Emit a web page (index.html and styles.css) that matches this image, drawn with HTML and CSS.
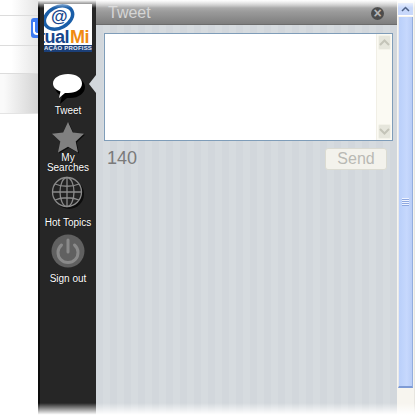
FILE: index.html
```html
<!DOCTYPE html>
<html lang="pt">
<head>
    <meta charset="UTF-8">
    <meta name="viewport" content="width=device-width, initial-scale=1.0">
    <title>Tweet</title>
    <link rel="stylesheet" href="styles.css">
</head>
<body>
    <div class="window">
        <!-- Pagina por tras do painel -->
        <div class="behind">
            <div class="row row-top"></div>
            <div class="row row-logo"><span class="blue-tag"></span></div>
            <div class="row row-mid"></div>
            <div class="row row-low"></div>
        </div>

        <!-- Menu lateral -->
        <nav class="sidebar">
            <div class="logo">
                <svg class="logo-ring" width="32" height="28" viewBox="0 0 32 28">
                    <ellipse cx="14.500" cy="13.500" rx="15" ry="10.500" transform="rotate(-28 14.500 13.500)" fill="none" stroke="#1a5ea8" stroke-width="3.500"/>
                </svg>
                <span class="logo-at">@</span>
                <div class="logo-name"><span class="logo-blue">tual</span><span class="logo-orange">Mi</span></div>
                <div class="logo-sub">AÇÃO PROFISS</div>
            </div>
            <div class="item item-tweet">
                <svg class="icon" width="38" height="38" viewBox="0 0 38 38">
                    <path d="M19 6c9 0 15 4 15 10 0 6-6 11-15 11l-3 0-7 6 2-8c-4-2-7-5-7-9C4 10 10 6 19 6z" fill="#000" transform="translate(2 2)"/>
                    <path d="M19 5c8.500 0 14 4 14 9.500S27.500 24 19 24h-3l-6 5 1.500-6.500C7 21 4 18 4 14.500 4 9 10.500 5 19 5z" fill="#fff"/>
                </svg>
                <span class="label">Tweet</span>
            </div>
            <div class="item item-search">
                <svg class="icon" width="34" height="33" viewBox="0 0 34 33">
                    <path d="M17 1l4.800 10.500 11.200 1.300-8.300 7.600 2.300 11.100-10-5.700-10 5.700 2.300-11.100L1 12.800l11.200-1.300z" fill="#0c0c0c" transform="translate(1 1)"/>
                    <path d="M17 1l4.800 10.500 11.200 1.300-8.300 7.600 2.300 11.100-10-5.700-10 5.700 2.300-11.100L1 12.800l11.200-1.300z" fill="#808080"/>
                </svg>
                <span class="label">My<br>Searches</span>
            </div>
            <div class="item item-topics">
                <svg class="icon" width="34" height="34" viewBox="0 0 34 34" fill="none" stroke="#8a8a8a" stroke-width="1.300">
                    <circle cx="18" cy="18" r="15" fill="#0c0c0c" stroke="none"/>
                    <circle cx="16" cy="16" r="14.500" fill="#222"/>
                    <ellipse cx="16" cy="16" rx="7" ry="14.500"/>
                    <path d="M16 1.500v29M1.500 16h29M4 8c7 3 17 3 24 0M4 24c7-3 17-3 24 0"/>
                </svg>
                <span class="label">Hot Topics</span>
            </div>
            <div class="item item-signout">
                <svg class="icon" width="34" height="34" viewBox="0 0 34 34" fill="none">
                    <circle cx="17" cy="17" r="16.500" fill="#606060"/>
                    <path d="M10.500 11a10 10 0 1 0 13 0" stroke="#8a8a8a" stroke-width="3" stroke-linecap="round"/>
                    <path d="M17 6v12" stroke="#8a8a8a" stroke-width="3" stroke-linecap="round"/>
                </svg>
                <span class="label">Sign out</span>
            </div>
            <span class="pointer"></span>
        </nav>

        <!-- Painel do tweet -->
        <main class="main">
            <header class="title-bar">
                <span class="title">Tweet</span>
                <span class="close">&times;</span>
            </header>
            <div class="editor">
                <div class="editor-text"></div>
                <div class="editor-scroll">
                    <span class="editor-btn">
                        <svg width="11" height="7" viewBox="0 0 11 7"><path d="M1 6l4.500-4.500L10 6" fill="none" stroke="#c4c4b8" stroke-width="2"/></svg>
                    </span>
                    <span class="editor-btn">
                        <svg width="11" height="7" viewBox="0 0 11 7"><path d="M1 1l4.500 4.500L10 1" fill="none" stroke="#c4c4b8" stroke-width="2"/></svg>
                    </span>
                </div>
            </div>
            <div class="actions">
                <span class="count">140</span>
                <button class="send">Send</button>
            </div>
        </main>

        <!-- Barra de rolagem da janela -->
        <div class="scrollbar">
            <div class="scroll-up">
                <svg width="9" height="6" viewBox="0 0 9 6"><path d="M1 5l3.500-3.500L8 5" fill="none" stroke="#4d6185" stroke-width="1.500"/></svg>
            </div>
            <div class="thumb"><span class="grip"></span></div>
        </div>

        <div class="fade-top"></div>
        <div class="fade-bottom"></div>
    </div>
</body>
</html>
```

FILE: styles.css
```css
* {
    box-sizing: border-box;
}

body {
    margin: 0;
    padding: 0;
    background-color: #ffffff;
    font-family: "Liberation Sans", Arial, sans-serif;
    overflow: hidden;
}

.window {
    position: relative;
    display: flex;
    width: 415px;
    height: 416px;
    overflow: hidden;
}

/* Pagina de fundo */
.behind {
    width: 38px;
    height: 114px;
    flex-shrink: 0;
    display: flex;
    flex-direction: column;
    border-bottom: 1px solid #e4e4e4;
}

.row {
    border-bottom: 1px solid #dcdcdc;
    background: linear-gradient(to right, #ffffff 30%, #e6e6e6);
}

.row-top {
    height: 16px;
}

.row-logo {
    height: 30px;
    display: flex;
    justify-content: flex-end;
    align-items: flex-start;
    padding-top: 2px;
}

.row-mid {
    height: 28px;
}

.row-low {
    height: 39px;
    border-bottom: none;
    background: linear-gradient(to right, #fafafa 10%, #d4d4d4);
}

.blue-tag {
    position: relative;
    display: block;
    width: 7px;
    height: 20px;
    background-color: #3d7bf2;
    border-radius: 3px 0 0 3px;
}

.blue-tag::after {
    content: "";
    position: absolute;
    left: 2px;
    top: 4px;
    width: 5px;
    height: 11px;
    border-left: 2px solid #ffffff;
    border-bottom: 2px solid #ffffff;
    border-radius: 0 0 0 4px;
}

/* Menu lateral */
.sidebar {
    position: relative;
    width: 58px;
    flex-shrink: 0;
    display: flex;
    flex-direction: column;
    align-items: center;
    background-color: #262626;
    border-left: 2px solid #0c0c0c;
    padding-top: 4px;
}

.logo {
    position: relative;
    width: 48px;
    height: 48px;
    background-color: #ffffff;
    overflow: hidden;
}

.logo-ring {
    position: absolute;
    left: 0;
    top: 0;
}

.logo-at {
    position: absolute;
    left: 7px;
    top: 3px;
    color: #17468c;
    font-size: 17px;
    font-weight: bold;
    line-height: 20px;
}

.logo-name {
    position: absolute;
    left: -5px;
    top: 26px;
    font-size: 18px;
    font-weight: bold;
    line-height: 15px;
    letter-spacing: -0.5px;
    white-space: nowrap;
}

.logo-blue {
    color: #17468c;
}

.logo-orange {
    margin-left: 1px;
    color: #f08a12;
}

.logo-sub {
    position: absolute;
    left: 0;
    right: 0;
    top: 41px;
    height: 7px;
    background-color: #1b3f78;
    color: #e8ecf4;
    font-size: 6px;
    font-weight: bold;
    line-height: 7px;
    letter-spacing: 0.2px;
    white-space: nowrap;
    overflow: hidden;
}

.item {
    display: flex;
    flex-direction: column;
    align-items: center;
}

.icon {
    display: block;
}

.label {
    color: #ffffff;
    font-size: 10px;
    line-height: 10px;
    text-align: center;
    white-space: nowrap;
    text-shadow: 0 0 1px #000000;
}

.item-tweet {
    margin-top: 17px;
}

.item-tweet .label {
    margin-top: -1px;
}

.item-search {
    margin-top: 5px;
}

.item-search .label {
    margin-top: -1px;
}

.item-topics {
    margin-top: 3px;
}

.item-topics .label {
    margin-top: 8px;
}

.item-signout {
    margin-top: 6px;
}

.item-signout .label {
    margin-top: 6px;
}

.pointer {
    position: absolute;
    right: 0;
    top: 75px;
    border-top: 9px solid transparent;
    border-bottom: 9px solid transparent;
    border-right: 7px solid #d2d7dc;
}

/* Painel principal */
.main {
    width: 301px;
    flex-shrink: 0;
    display: flex;
    flex-direction: column;
    background-color: #d2d7dc;
    background-image: repeating-linear-gradient(to right, #d2d7dc 0, #d2d7dc 7px, #d6dbdf 7px, #d6dbdf 14px);
}

.title-bar {
    height: 25px;
    flex-shrink: 0;
    display: flex;
    justify-content: space-between;
    align-items: center;
    padding: 2px 13px 0 12px;
    background: linear-gradient(to bottom, #c8c8c8, #9a9a9a 50%, #7e7e7e);
    border-bottom: 1px solid #6c6c6c;
}

.title {
    color: #d4d4d4;
    font-size: 16px;
}

.close {
    width: 13px;
    height: 13px;
    border-radius: 50%;
    background-color: #4c4c4c;
    color: #b5b5b5;
    font-size: 14px;
    font-weight: bold;
    line-height: 12px;
    text-align: center;
}

.editor {
    display: flex;
    width: 289px;
    height: 108px;
    margin: 8px 0 0 8px;
    border: 1px solid #7f9db9;
    background-color: #ffffff;
}

.editor-text {
    flex: 1;
}

.editor-scroll {
    width: 16px;
    display: flex;
    flex-direction: column;
    justify-content: space-between;
    padding: 1px;
    background-color: #fbfaf3;
    border-left: 1px solid #f1efe6;
}

.editor-btn {
    height: 15px;
    display: flex;
    justify-content: center;
    align-items: center;
    background-color: #e6e6dc;
    border: 1px solid #f4f3ea;
    border-radius: 2px;
}

.actions {
    display: flex;
    justify-content: space-between;
    align-items: center;
    width: 280px;
    height: 22px;
    margin: 7px 0 0 11px;
}

.count {
    padding-bottom: 2px;
    color: #7a7a7a;
    font-size: 18px;
    line-height: 20px;
}

.send {
    width: 62px;
    height: 22px;
    padding: 0;
    background-color: #f3f2ec;
    border: 1px solid #dbdbd2;
    border-radius: 3px;
    color: #b9b9b4;
    font-family: "Liberation Sans", Arial, sans-serif;
    font-size: 16px;
    line-height: 18px;
}

/* Barra de rolagem */
.scrollbar {
    width: 18px;
    flex-shrink: 0;
    display: flex;
    flex-direction: column;
    align-items: stretch;
    padding: 3px 0 0 0;
    background-color: #f7f5ef;
    border-right: 1px solid #e8e6e0;
}

.scroll-up {
    height: 13px;
    margin: 0 1px;
    display: flex;
    justify-content: center;
    align-items: center;
    background-color: #c8d8fb;
    border-bottom: 1px solid #ffffff;
}

.thumb {
    height: 371px;
    margin: 1px 1px 0 1px;
    display: flex;
    justify-content: center;
    align-items: center;
    background: linear-gradient(to right, #b9cffa, #c6d8fd 60%, #b9cdf7);
    border-right: 1px solid #94aede;
    border-bottom: 2px solid #7e9bd6;
    border-left: 1px solid #e8e8ea;
}

.grip {
    width: 7px;
    height: 8px;
    background-image: repeating-linear-gradient(to bottom, #eef3ff 0, #eef3ff 1px, #8ea8e0 1px, #8ea8e0 2px);
}

/* Esmaecimento nas bordas */
.fade-top {
    position: absolute;
    left: 38px;
    top: 0;
    right: 0;
    height: 8px;
    background: linear-gradient(to bottom, #ffffff, rgba(255, 255, 255, 0));
}

.fade-bottom {
    position: absolute;
    left: 38px;
    bottom: 0;
    right: 0;
    height: 13px;
    background: linear-gradient(to bottom, rgba(255, 255, 255, 0), #ffffff 90%);
}
```
